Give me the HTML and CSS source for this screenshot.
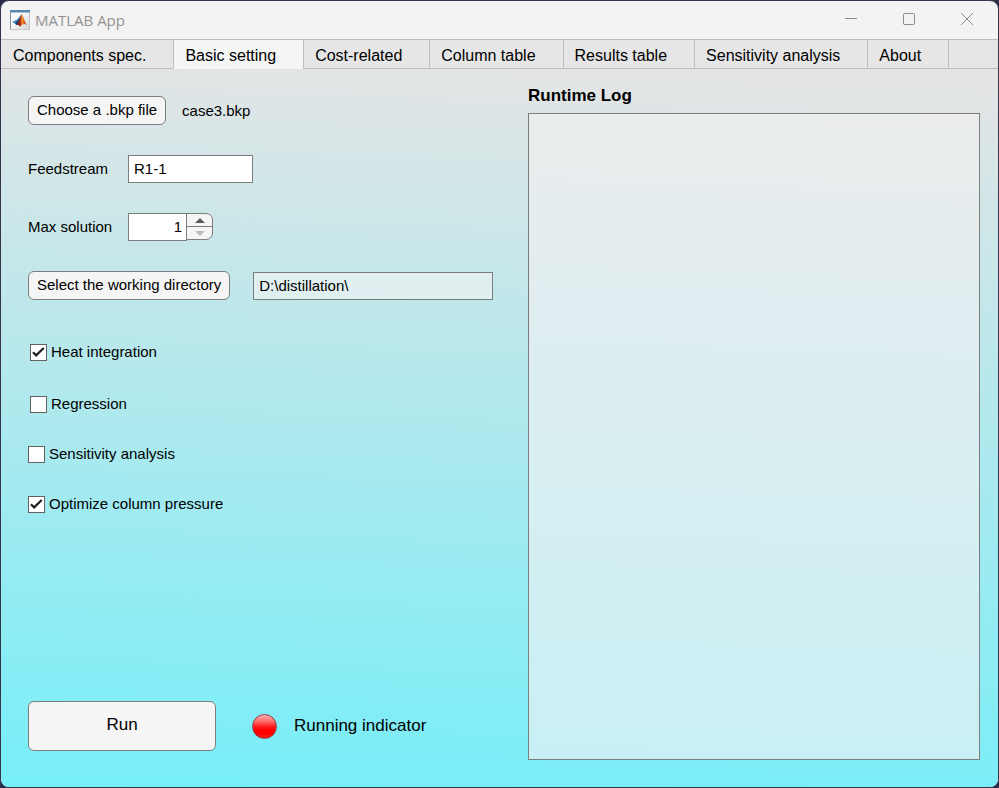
FILE: index.html
```html
<!DOCTYPE html>
<html lang="en">
<head>
<meta charset="utf-8">
<meta name="viewport" content="width=device-width, initial-scale=1">
<title>MATLAB App</title>
<link rel="stylesheet" href="styles.css">
</head>
<body>
<div class="window">
  <header class="titlebar">
    <svg class="app-icon" viewBox="0 0 20 20" aria-hidden="true">
      <defs>
        <linearGradient id="frame" x1="0" y1="0" x2="1" y2="1"><stop offset=".4" stop-color="#fafafa"/><stop offset="1" stop-color="#cfd3d6"/></linearGradient>
        <linearGradient id="flame" x1="0" y1="0" x2="1" y2="0"><stop offset="0" stop-color="#5a1717"/><stop offset=".35" stop-color="#a82a18"/><stop offset=".55" stop-color="#f39a2b"/><stop offset=".75" stop-color="#d9531e"/><stop offset="1" stop-color="#b8321a"/></linearGradient>
      </defs>
      <rect x=".5" y=".5" width="19" height="19" fill="url(#frame)" stroke="#c3c8cc"/>
      <rect x="0" y="0" width="20" height="2.500" fill="#5689ae"/>
      <path d="M.5 3V19.500" stroke="#8e969c"/>
      <path d="M2 12L7 9.400C8.400 9 9.500 6 11.500 4.500L9 13L6.500 15L5 13.500Z" fill="#3f8cc4"/>
      <path d="M5 13.500L8.500 9.500L10.500 7L9.500 14L6.500 15Z" fill="#243f70"/>
      <path d="M11.700 4C13.500 6 14.500 12 17 15.500C14.500 13.200 13 13.500 10 17C9.200 15.500 8.200 14.500 6.500 15C9 12.500 9.800 7 11.700 4Z" fill="url(#flame)"/>
    </svg>
    <h1 class="title">MATLAB App</h1>
    <div class="window-controls">
      <button type="button" aria-label="Minimize"><svg viewBox="0 0 14 14"><path d="M1 6.500H13"/></svg></button>
      <button type="button" aria-label="Maximize"><svg viewBox="0 0 14 14"><rect x="1.500" y="1.500" width="11" height="11" rx="1"/></svg></button>
      <button type="button" aria-label="Close"><svg viewBox="0 0 14 14"><path d="M1 1L13 13M13 1L1 13"/></svg></button>
    </div>
  </header>

  <nav class="tabs" role="tablist">
    <button type="button" class="tab" role="tab" aria-selected="false">Components spec.</button>
    <button type="button" class="tab" role="tab" aria-selected="true">Basic setting</button>
    <button type="button" class="tab" role="tab" aria-selected="false">Cost-related</button>
    <button type="button" class="tab" role="tab" aria-selected="false">Column table</button>
    <button type="button" class="tab" role="tab" aria-selected="false">Results table</button>
    <button type="button" class="tab" role="tab" aria-selected="false">Sensitivity analysis</button>
    <button type="button" class="tab" role="tab" aria-selected="false">About</button>
  </nav>

  <main class="panel">
    <form class="settings">
      <div class="row file-row">
        <button type="button" class="btn">Choose a .bkp file</button>
        <output>case3.bkp</output>
      </div>
      <div class="row">
        <label class="field-label" for="feed">Feedstream</label>
        <input class="text feed" id="feed" type="text" value="R1-1">
      </div>
      <div class="row">
        <label class="field-label" for="max">Max solution</label>
        <input class="text max" id="max" type="text" inputmode="numeric" value="1">
        <div class="stepper">
          <button type="button" aria-label="Increase"><svg viewBox="0 0 10 5"><path d="M0 5L5 0L10 5Z"/></svg></button>
          <button type="button" aria-label="Decrease" disabled><svg viewBox="0 0 10 5"><path d="M0 0L5 5L10 0Z"/></svg></button>
        </div>
      </div>
      <div class="row dir-row">
        <button type="button" class="btn">Select the working directory</button>
        <input class="text dir" type="text" value="D:\distillation\" aria-label="Working directory" readonly>
      </div>
      <div class="checks">
        <div class="inset">
          <label class="check"><input type="checkbox" checked>Heat integration</label>
          <label class="check"><input type="checkbox">Regression</label>
        </div>
        <label class="check"><input type="checkbox">Sensitivity analysis</label>
        <label class="check"><input type="checkbox" checked>Optimize column pressure</label>
      </div>
      <div class="run-row">
        <button type="button" class="btn run">Run</button>
        <span class="lamp"></span>
        <span>Running indicator</span>
      </div>
    </form>
    <section class="log">
      <label for="log">Runtime Log</label>
      <textarea id="log" readonly></textarea>
    </section>
  </main>
</div>
</body>
</html>
```
FILE: styles.css
```css
* {
  box-sizing: border-box;
}

body {
  margin: 0;
  background: #2b2d48;
  color: #000;
  font: 15px/18px "Liberation Sans", Arial, sans-serif;
}

button,
input,
textarea {
  margin: 0;
  color: inherit;
  font: inherit;
}

.window {
  display: flex;
  flex-direction: column;
  min-height: 100vh;
  border: 1px solid #34344a;
  border-radius: 9px;
  background: #f3f3f3;
  overflow: hidden;
}

/* Title bar */
.titlebar {
  display: flex;
  align-items: center;
  height: 38px;
  padding: 0 2px 0 9px;
}

.app-icon {
  width: 20px;
  height: 20px;
}

.title {
  flex: 1;
  margin: 0 0 0 5px;
  color: #929292;
  font: 15px/20px "Open Sans", "Noto Sans", sans-serif;
}

.window-controls {
  display: flex;
  align-self: flex-start;
}

.window-controls button {
  display: grid;
  place-items: center;
  width: 58px;
  height: 36px;
  padding: 0;
  border: 0;
  background: none;
}

.window-controls svg {
  width: 14px;
  height: 14px;
  fill: none;
  stroke: #8c8c8c;
}

/* Tabs */
.tabs {
  display: flex;
  height: 30px;
  padding-left: 1px;
  background: linear-gradient(#bdbdbd, #bdbdbd) bottom / 100% 1px no-repeat #e6e6e6;
  border-top: 1px solid #bdbdbd;
}

.tab {
  padding: 2px 27px 0 11px;
  border: 0;
  border-right: 1px solid #bdbdbd;
  background: none;
  font-size: 16px;
  white-space: nowrap;
}

.tab[aria-selected="true"] {
  background: #f5f5f5;
}

/* Page content */
.panel {
  flex: 1;
  display: grid;
  grid-template-columns: 465px minmax(0, 1fr);
  column-gap: 35px;
  padding: 17px 18px 27px 27px;
  background: linear-gradient(182deg, #e6e4e4, #76eef8);
}

.settings {
  display: flex;
  flex-direction: column;
  padding: 10px 0 9px;
}

.row {
  display: flex;
  align-items: center;
  height: 29px;
  margin-bottom: 29px;
}

.file-row {
  gap: 16px;
}

.dir-row {
  gap: 23px;
  margin-top: 1px;
}

.field-label {
  width: 100px;
}

.btn {
  height: 29px;
  padding: 0 8px 2px;
  border: 1px solid #7d7d7d;
  border-radius: 6px;
  background: #f5f5f5;
  white-space: nowrap;
}

.text {
  height: 28px;
  padding: 0 5px;
  border: 1px solid #7d7d7d;
  border-radius: 0;
  background: #fff;
}

.feed {
  width: 125px;
}

.max {
  width: 59px;
  padding-right: 4px;
  text-align: right;
}

.dir {
  flex: 1;
  min-width: 0;
  background: rgb(245 245 245 / 60%);
}

.stepper {
  width: 27px;
  height: 27px;
  margin-left: -1px;
  border: 1px solid #7d7d7d;
  border-radius: 0 7px 7px 0;
  background: #f5f5f5;
}

.stepper button {
  display: grid;
  place-items: center;
  width: 100%;
  height: 12px;
  padding: 0;
  border: 0;
  background: none;
}

.stepper button + button {
  height: 13px;
  border-top: 1px solid #7d7d7d;
}

.stepper svg {
  width: 10px;
  height: 5px;
  fill: #5c5c5c;
}

.stepper button:disabled svg {
  fill: #bcbcbc;
}

.checks,
.inset {
  display: flex;
  flex-direction: column;
  align-items: flex-start;
  gap: 32px;
}

.checks {
  margin-top: 14px;
}

.inset {
  gap: 34px;
  padding-left: 2px;
}

.check {
  display: flex;
  align-items: center;
  gap: 4px;
}

.check input {
  appearance: none;
  width: 17px;
  height: 17px;
  border: 1px solid #616161;
  background: #fff;
}

.check input:checked::before {
  content: "";
  display: block;
  width: 15px;
  height: 15px;
  background: #212121;
  clip-path: polygon(8% 56%, 18% 46%, 34% 62%, 80% 18%, 90% 28%, 34% 83%);
}

.run-row {
  display: flex;
  align-items: center;
  margin-top: auto;
  font-size: 17px;
}

.run {
  width: 188px;
  height: 50px;
}

.lamp {
  width: 25px;
  height: 25px;
  margin: 0 17px 0 36px;
  border: 1px solid #8f4348;
  border-radius: 50%;
  background: linear-gradient(#ffb0b0, #ff6a6a 28%, #ff2020 50%, #f00 65%, #fa0000 80%, #ff1818);
}

.log {
  display: flex;
  flex-direction: column;
  gap: 7px;
}

.log label {
  font-size: 17px;
  line-height: 20px;
  font-weight: bold;
}

.log textarea {
  flex: 1;
  width: 100%;
  border: 1px solid #7d7d7d;
  border-radius: 0;
  background: rgb(242 241 242 / 64%);
  resize: none;
}
```
